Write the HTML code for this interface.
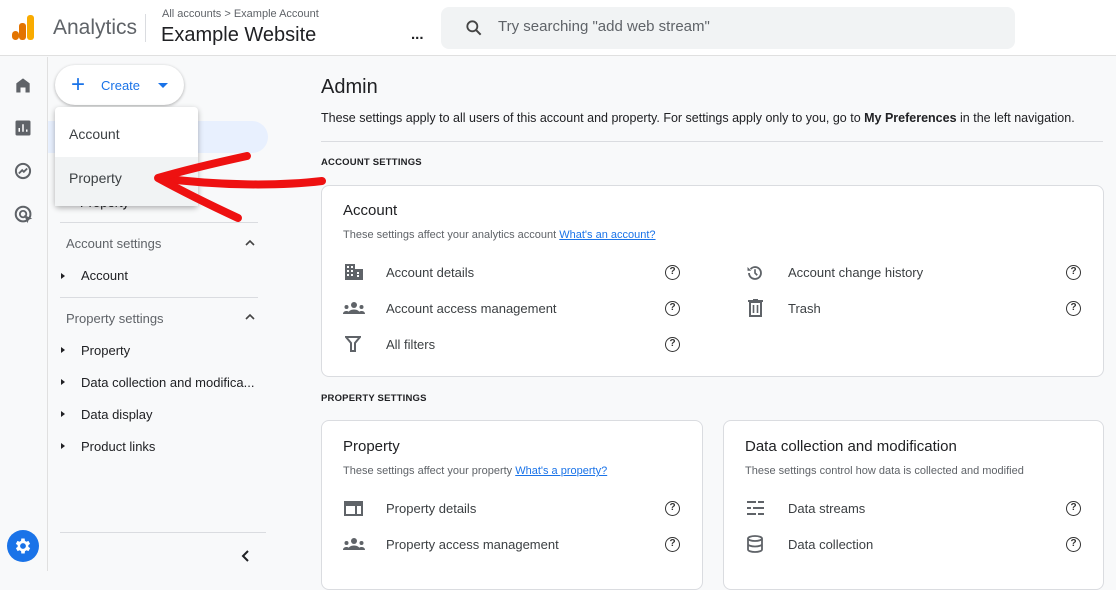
<!DOCTYPE html>
<html><head><meta charset="utf-8"><style>
*{box-sizing:border-box;margin:0;padding:0}
body{width:1116px;height:571px;overflow:hidden;background:#f8f9fa;font-family:"Liberation Sans",Arial,sans-serif;color:#3c4043;position:relative}
.a{position:absolute}
.hdr{left:0;top:0;width:1116px;height:56px;background:#fff;border-bottom:1px solid #e0e0e0}
.card{background:#fff;border:1px solid #dadce0;border-radius:8px}
.t{white-space:nowrap}
.row{font-size:13px;color:#3c4043}
.help{width:15px;height:15px;border:1.8px solid #333;border-radius:50%;font-size:10px;font-weight:bold;text-align:center;line-height:12px;color:#333}
.sec{font-size:9.5px;font-weight:bold;color:#202124;letter-spacing:.2px}
.side{font-size:13px;color:#202124}
.tri{width:0;height:0;border-top:3.5px solid transparent;border-bottom:3.5px solid transparent;border-left:4px solid #202124}
</style></head><body>
<div class="a hdr"></div>
<div class="a" style="left:12px;top:31px;width:7px;height:9px;background:#e37400;border-radius:3.5px"></div>
<div class="a" style="left:19px;top:23px;width:7px;height:17px;background:#e37400;border-radius:3px"></div>
<div class="a" style="left:27px;top:15px;width:7px;height:25px;background:#f9ab00;border-radius:3px"></div>
<div class="a t" style="left:53px;top:16px;font-size:21px;color:#5f6368">Analytics</div>
<div class="a" style="left:145px;top:14px;width:1px;height:28px;background:#dadce0"></div>
<div class="a t" style="left:162px;top:8px;font-size:11px;color:#5f6368">All accounts &gt; Example Account</div>
<div class="a t" style="left:161px;top:24px;font-size:20px;color:#202124">Example Website</div>
<div class="a t" style="left:411px;top:26px;font-size:15px;color:#202124;font-weight:bold">...</div>
<div class="a" style="left:441px;top:7px;width:574px;height:42px;background:#f1f3f4;border-radius:8px"></div>
<svg class="a" style="left:464px;top:18px" width="20" height="20" viewBox="0 0 24 24"><circle cx="10" cy="10" r="6" fill="none" stroke="#444" stroke-width="2.2"/><path d="M14.5 14.5L20 20" stroke="#444" stroke-width="2.4"/></svg>
<div class="a t" style="left:498px;top:18px;font-size:15px;color:#5f6368">Try searching "add web stream"</div>

<div class="a" style="left:47px;top:57px;width:1px;height:514px;background:#e0e0e0"></div>
<svg class="a" style="left:13px;top:75px" width="20" height="20" viewBox="0 0 24 24"><path d="M4 21V10l8-6 8 6v11h-5v-6h-6v6z" fill="#5f6368"/></svg>
<svg class="a" style="left:14px;top:119px" width="18" height="18" viewBox="0 0 24 24"><rect x="2" y="2" width="20" height="20" rx="2" fill="#5f6368"/><path d="M7 17v-5M12 17V7M17 17v-3" stroke="#fff" stroke-width="2"/></svg>
<svg class="a" style="left:13px;top:161px" width="20" height="20" viewBox="0 0 24 24"><circle cx="12" cy="12" r="8.5" fill="none" stroke="#5f6368" stroke-width="2.4"/><path d="M7 15l4-4 2 2 4-4" stroke="#5f6368" stroke-width="2.2" fill="none"/></svg>
<svg class="a" style="left:13px;top:204px" width="22" height="22" viewBox="0 0 24 24"><circle cx="11" cy="11" r="8" fill="none" stroke="#5f6368" stroke-width="2.2"/><circle cx="11" cy="11" r="3.5" fill="none" stroke="#5f6368" stroke-width="2"/><path d="M12 12l9 4-4 1-1 4z" fill="#5f6368"/></svg>
<div class="a" style="left:7px;top:530px;width:32px;height:32px;border-radius:50%;background:#1a73e8"></div>
<svg class="a" style="left:13px;top:536px" width="20" height="20" viewBox="0 0 24 24"><path fill="#fff" d="M19.4 13a7.5 7.5 0 000-2l2.1-1.6-2-3.5-2.5 1a7 7 0 00-1.7-1L15 3h-4l-.4 2.9a7 7 0 00-1.7 1l-2.5-1-2 3.5L6.6 11a7.5 7.5 0 000 2l-2.1 1.6 2 3.5 2.5-1a7 7 0 001.7 1L11 21h4l.4-2.9a7 7 0 001.7-1l2.5 1 2-3.5zM13 15.5a3.5 3.5 0 110-7 3.5 3.5 0 010 7z" transform="translate(-1 0)"/></svg>

<div class="a" style="left:48px;top:121px;width:220px;height:32px;background:#e8f0fe;border-radius:0 16px 16px 0"></div>
<div class="a" style="left:55px;top:65px;width:129px;height:40px;background:#fff;border-radius:20px;box-shadow:0 1px 3px rgba(0,0,0,.3)"></div>
<div class="a t" style="left:71px;top:73px;font-size:24px;color:#1a73e8;line-height:24px;font-weight:300">+</div>
<div class="a t" style="left:101px;top:78px;font-size:13px;color:#1a73e8">Create</div>
<div class="a" style="left:158px;top:83px;border-left:5px solid transparent;border-right:5px solid transparent;border-top:5px solid #1a73e8"></div>
<div class="a" style="left:60px;top:222px;width:198px;height:1px;background:#dadce0"></div>
<div class="a t" style="left:80px;top:195px;font-size:13px;color:#202124">Property</div>

<div class="a" style="left:55px;top:107px;width:143px;height:99px;background:#fff;border-radius:4px;box-shadow:0 2px 6px rgba(0,0,0,.3)"></div>
<div class="a" style="left:55px;top:157px;width:143px;height:49px;background:#f1f3f4"></div>
<div class="a t" style="left:69px;top:126px;font-size:14px;color:#3c4043">Account</div>
<div class="a t" style="left:69px;top:170px;font-size:14px;color:#3c4043">Property</div>

<div class="a t" style="left:66px;top:236px;font-size:13px;color:#5f6368">Account settings</div>
<svg class="a" style="left:244px;top:238px" width="12" height="10"><path d="M2 7l4-4 4 4" stroke="#444" stroke-width="1.6" fill="none"/></svg>
<div class="a tri" style="left:61px;top:273px"></div><div class="a t side" style="left:81px;top:268px">Account</div>
<div class="a" style="left:60px;top:297px;width:198px;height:1px;background:#dadce0"></div>
<div class="a t" style="left:66px;top:311px;font-size:13px;color:#5f6368">Property settings</div>
<svg class="a" style="left:244px;top:312px" width="12" height="10"><path d="M2 7l4-4 4 4" stroke="#444" stroke-width="1.6" fill="none"/></svg>
<div class="a tri" style="left:61px;top:347px"></div><div class="a t side" style="left:81px;top:343px">Property</div>
<div class="a tri" style="left:61px;top:379px"></div><div class="a t side" style="left:81px;top:375px">Data collection and modifica...</div>
<div class="a tri" style="left:61px;top:411px"></div><div class="a t side" style="left:81px;top:407px">Data display</div>
<div class="a tri" style="left:61px;top:443px"></div><div class="a t side" style="left:81px;top:439px">Product links</div>
<div class="a" style="left:60px;top:532px;width:206px;height:1px;background:#dadce0"></div>
<svg class="a" style="left:239px;top:549px" width="12" height="14"><path d="M9 2L4 7l5 5" stroke="#202124" stroke-width="2" fill="none"/></svg>

<div class="a t" style="left:321px;top:76px;font-size:20px;color:#202124">Admin</div>
<div class="a t" style="left:321px;top:111px;font-size:12.5px;color:#202124">These settings apply to all users of this account and property. For settings apply only to you, go to <b>My Preferences</b> in the left navigation.</div>
<div class="a" style="left:321px;top:141px;width:782px;height:1px;background:#dadce0"></div>
<div class="a t sec" style="left:321px;top:157px">ACCOUNT SETTINGS</div>

<div class="a card" style="left:321px;top:185px;width:783px;height:192px"></div>
<div class="a t" style="left:343px;top:202px;font-size:15px;color:#202124">Account</div>
<div class="a t" style="left:343px;top:229px;font-size:11px;color:#5f6368">These settings affect your analytics account <span style="color:#1a73e8;text-decoration:underline">What's an account?</span></div>
<svg class="a" style="left:345px;top:264px" width="18" height="16" viewBox="0 0 18 16"><rect x="0" y="0" width="10" height="16" fill="#5f6368"/><rect x="10" y="5" width="8" height="11" fill="#5f6368"/><g fill="#fff"><rect x="2" y="2" width="2" height="2"/><rect x="6" y="2" width="2" height="2"/><rect x="2" y="6" width="2" height="2"/><rect x="6" y="6" width="2" height="2"/><rect x="2" y="10" width="2" height="2"/><rect x="6" y="10" width="2" height="2"/><rect x="12" y="8" width="2" height="2"/><rect x="12" y="11" width="2" height="2"/></g></svg>
<div class="a t row" style="left:386px;top:265px">Account details</div><div class="a help" style="left:665px;top:265px">?</div>
<svg class="a" style="left:343px;top:301px" width="22" height="14" viewBox="0 0 22 14"><g fill="#5f6368"><circle cx="11" cy="4" r="3"/><path d="M5 13c0-3 3-4.5 6-4.5s6 1.5 6 4.5z"/><circle cx="3.5" cy="6" r="2"/><circle cx="18.5" cy="6" r="2"/><path d="M0 13c0-2 1.5-3 3.5-3s3 1 3 3zM15.5 13c0-2 1-3 3-3s3.5 1 3.5 3z"/></g></svg>
<div class="a t row" style="left:386px;top:301px">Account access management</div><div class="a help" style="left:665px;top:301px">?</div>
<svg class="a" style="left:345px;top:336px" width="16" height="16" viewBox="0 0 16 16"><path d="M1 1h14l-5 6v8H6V7z" fill="none" stroke="#5f6368" stroke-width="2"/></svg>
<div class="a t row" style="left:386px;top:337px">All filters</div><div class="a help" style="left:665px;top:337px">?</div>
<svg class="a" style="left:746px;top:264px" width="18" height="18" viewBox="0 0 24 24"><path d="M4 12a8 8 0 108-8 8 8 0 00-6 3" fill="none" stroke="#5f6368" stroke-width="2.4"/><path d="M2 4v5h5z" fill="#5f6368"/><path d="M12 7v5l3 3" stroke="#5f6368" stroke-width="2.2" fill="none"/></svg>
<div class="a t row" style="left:788px;top:265px">Account change history</div><div class="a help" style="left:1066px;top:265px">?</div>
<svg class="a" style="left:748px;top:299px" width="15" height="18" viewBox="0 0 15 18"><path d="M0 2h15M5 0h5" stroke="#5f6368" stroke-width="2"/><rect x="2" y="3" width="11" height="14" fill="none" stroke="#5f6368" stroke-width="2"/><path d="M5.5 6v8M9.5 6v8" stroke="#5f6368" stroke-width="1.6"/></svg>
<div class="a t row" style="left:788px;top:301px">Trash</div><div class="a help" style="left:1066px;top:301px">?</div>

<div class="a t sec" style="left:321px;top:393px">PROPERTY SETTINGS</div>
<div class="a card" style="left:321px;top:420px;width:382px;height:170px"></div>
<div class="a card" style="left:723px;top:420px;width:381px;height:170px"></div>
<div class="a t" style="left:343px;top:438px;font-size:15px;color:#202124">Property</div>
<div class="a t" style="left:343px;top:465px;font-size:11px;color:#5f6368">These settings affect your property <span style="color:#1a73e8;text-decoration:underline">What's a property?</span></div>
<svg class="a" style="left:344px;top:501px" width="19" height="15" viewBox="0 0 19 15"><rect x="1" y="1" width="17" height="13" fill="none" stroke="#5f6368" stroke-width="2"/><rect x="1" y="1" width="17" height="4" fill="#5f6368"/><rect x="11" y="5" width="2" height="9" fill="#5f6368"/></svg>
<div class="a t row" style="left:386px;top:501px">Property details</div><div class="a help" style="left:665px;top:501px">?</div>
<svg class="a" style="left:343px;top:537px" width="22" height="14" viewBox="0 0 22 14"><g fill="#5f6368"><circle cx="11" cy="4" r="3"/><path d="M5 13c0-3 3-4.5 6-4.5s6 1.5 6 4.5z"/><circle cx="3.5" cy="6" r="2"/><circle cx="18.5" cy="6" r="2"/><path d="M0 13c0-2 1.5-3 3.5-3s3 1 3 3zM15.5 13c0-2 1-3 3-3s3.5 1 3.5 3z"/></g></svg>
<div class="a t row" style="left:386px;top:537px">Property access management</div><div class="a help" style="left:665px;top:537px">?</div>
<div class="a t" style="left:745px;top:438px;font-size:15px;color:#202124">Data collection and modification</div>
<div class="a t" style="left:745px;top:465px;font-size:11px;color:#5f6368">These settings control how data is collected and modified</div>
<svg class="a" style="left:747px;top:500px" width="17" height="16" viewBox="0 0 17 16"><g fill="#5f6368"><rect x="0" y="1" width="9" height="2"/><rect x="11" y="1" width="6" height="2"/><rect x="0" y="7" width="4" height="2"/><rect x="6" y="7" width="11" height="2"/><rect x="0" y="13" width="9" height="2"/><rect x="11" y="13" width="6" height="2"/></g></svg>
<div class="a t row" style="left:788px;top:501px">Data streams</div><div class="a help" style="left:1066px;top:501px">?</div>
<svg class="a" style="left:747px;top:535px" width="16" height="18" viewBox="0 0 16 18"><ellipse cx="8" cy="3.5" rx="7" ry="2.5" fill="none" stroke="#5f6368" stroke-width="1.8"/><path d="M1 3.5v11c0 1.4 3 2.5 7 2.5s7-1.1 7-2.5v-11M1 9c0 1.4 3 2.5 7 2.5s7-1.1 7-2.5" fill="none" stroke="#5f6368" stroke-width="1.8"/></svg>
<div class="a t row" style="left:788px;top:537px">Data collection</div><div class="a help" style="left:1066px;top:537px">?</div>

<svg class="a" style="left:0;top:0" width="1116" height="571"><g stroke="#ee1111" stroke-linecap="round" fill="none"><path d="M322 181C280 186 220 186 160 178" stroke-width="8"/><path d="M247 156C215 163 185 170 158 178C180 190 210 205 238 218" stroke-width="8" stroke-linejoin="round"/></g></svg>
</body></html>
